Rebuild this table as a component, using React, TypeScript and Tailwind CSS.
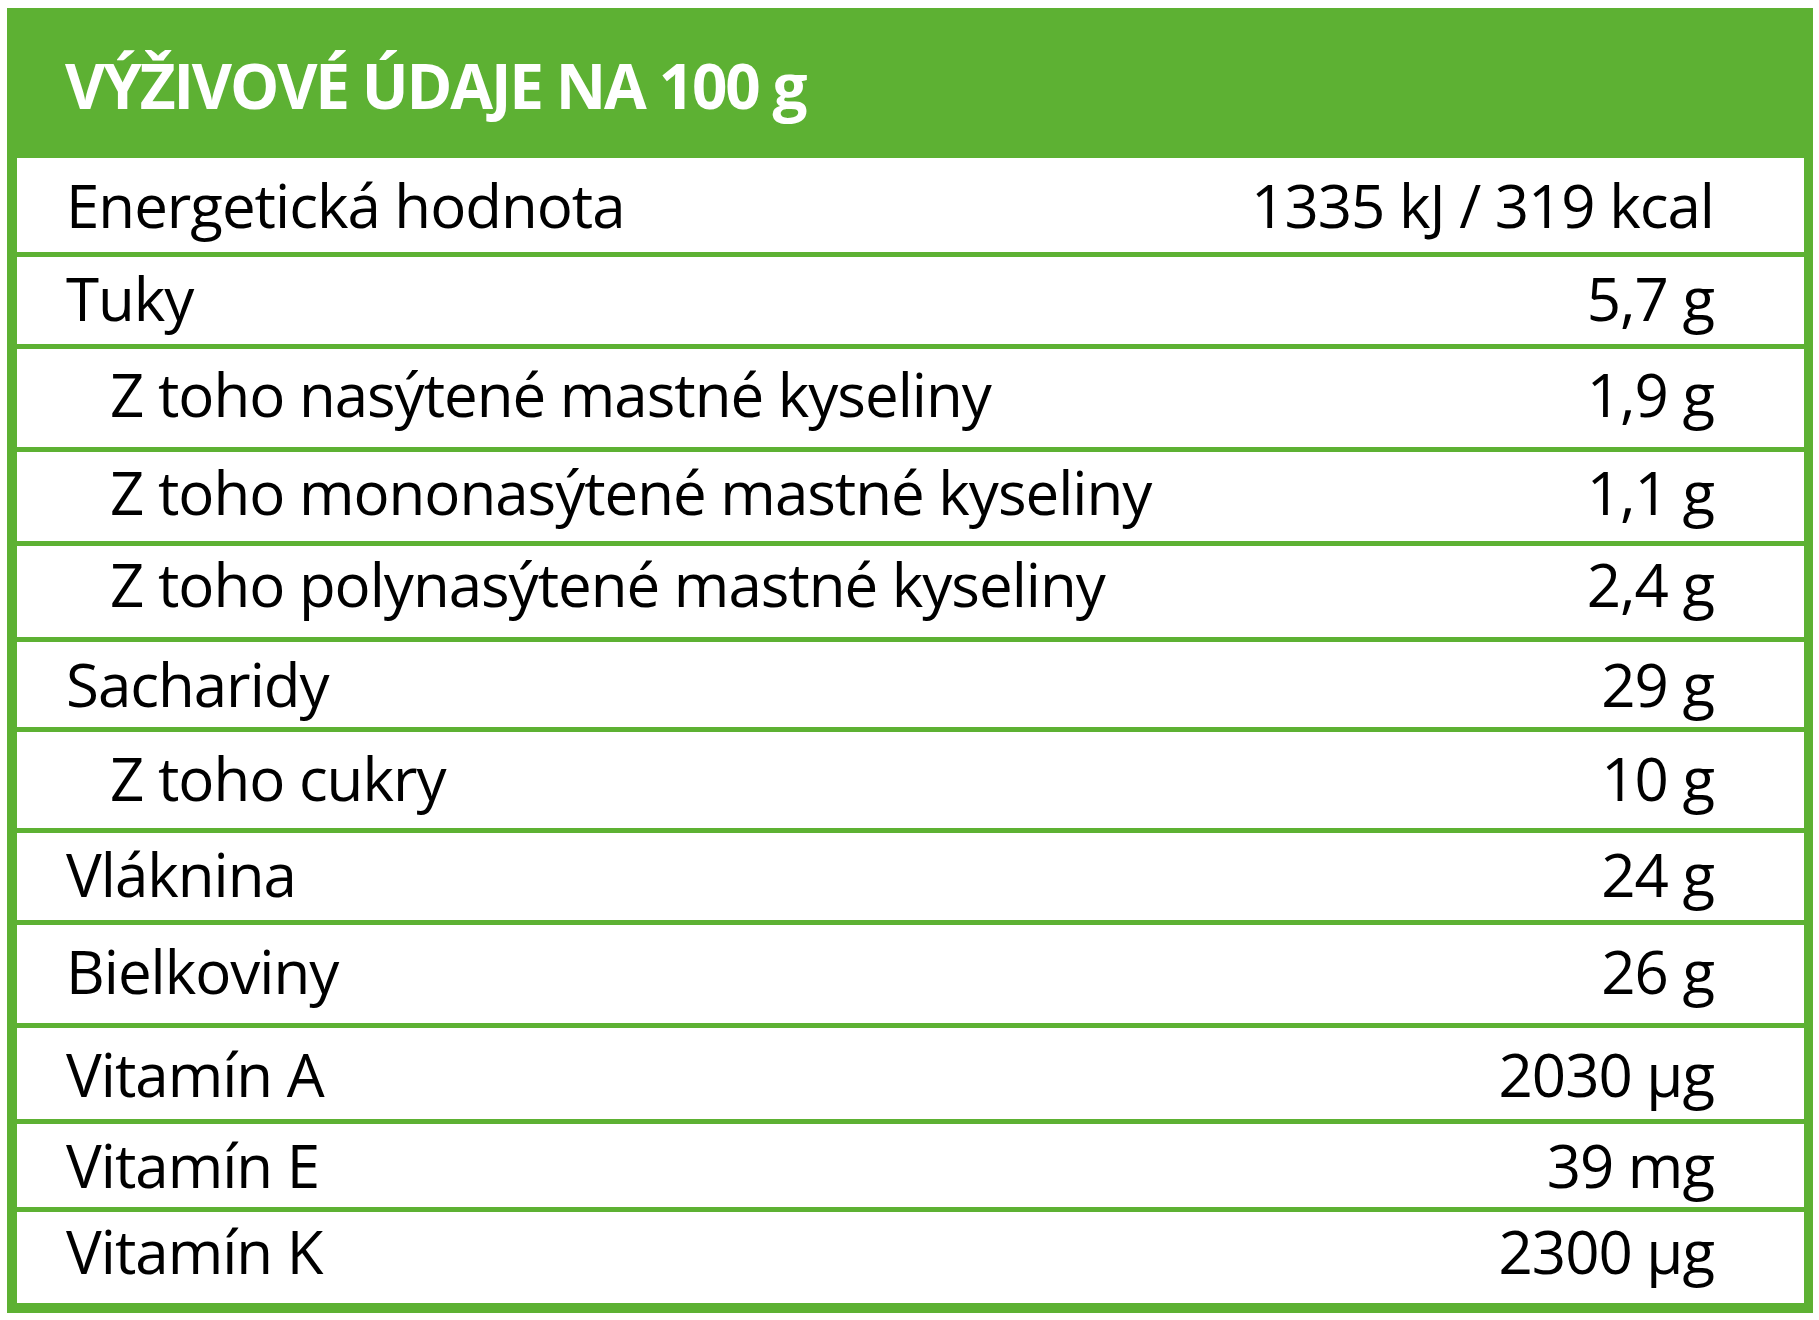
// pb nudges the text up a little where the original sits above the row's middle
const rows = [
  { label: 'Energetická hodnota', value: '1335 kJ / 319 kcal', h: 'h-[94px]', pb: 'pb-0', sub: false },
  { label: 'Tuky', value: '5,7 g', h: 'h-[87px]', pb: 'pb-[6px]', sub: false },
  { label: 'Z toho nasýtené mastné kyseliny', value: '1,9 g', h: 'h-[98px]', pb: 'pb-[8px]', sub: true },
  { label: 'Z toho mononasýtené mastné kyseliny', value: '1,1 g', h: 'h-[89px]', pb: 'pb-[10px]', sub: true },
  { label: 'Z toho polynasýtené mastné kyseliny', value: '2,4 g', h: 'h-[91px]', pb: 'pb-[16px]', sub: true },
  { label: 'Sacharidy', value: '29 g', h: 'h-[85px]', pb: 'pb-[2px]', sub: false },
  { label: 'Z toho cukry', value: '10 g', h: 'h-[96px]', pb: 'pb-[4px]', sub: true },
  { label: 'Vláknina', value: '24 g', h: 'h-[87px]', pb: 'pb-[6px]', sub: false },
  { label: 'Bielkoviny', value: '26 g', h: 'h-[98px]', pb: 'pb-[6px]', sub: false },
  { label: 'Vitamín A', value: '2030 µg', h: 'h-[91px]', pb: 'pb-0', sub: false },
  { label: 'Vitamín E', value: '39 mg', h: 'h-[83px]', pb: 'pb-[2px]', sub: false },
  { label: 'Vitamín K', value: '2300 µg', h: 'h-[91px]', pb: 'pb-[14px]', sub: false },
];

export default function App() {
  return (
    <div className="w-[1819px] h-[1320px] bg-white pt-[8px] pl-[7px] font-['Open_Sans',sans-serif]">
      <div className="w-[1806px] bg-[#5db133] pb-[10px] flex flex-col">
        <div className="h-[150px] flex items-center pl-[58px] pt-[4px]">
          <h1 className="text-white font-bold text-[62px] leading-none tracking-[-2.15px]">
            VÝŽIVOVÉ ÚDAJE NA 100 g
          </h1>
        </div>

        <div className="flex flex-col gap-[5px] pl-[10px] pr-[9px]">
          {rows.map((r) => (
            <div
              key={r.label}
              className={`${r.h} ${r.pb} bg-white flex items-center justify-between pr-[90px] text-black text-[60px] leading-none tracking-[-1px] ${
                r.sub ? 'pl-[93px]' : 'pl-[49px]'
              }`}
            >
              <span>{r.label}</span>
              <span>{r.value}</span>
            </div>
          ))}
        </div>
      </div>
    </div>
  );
}
